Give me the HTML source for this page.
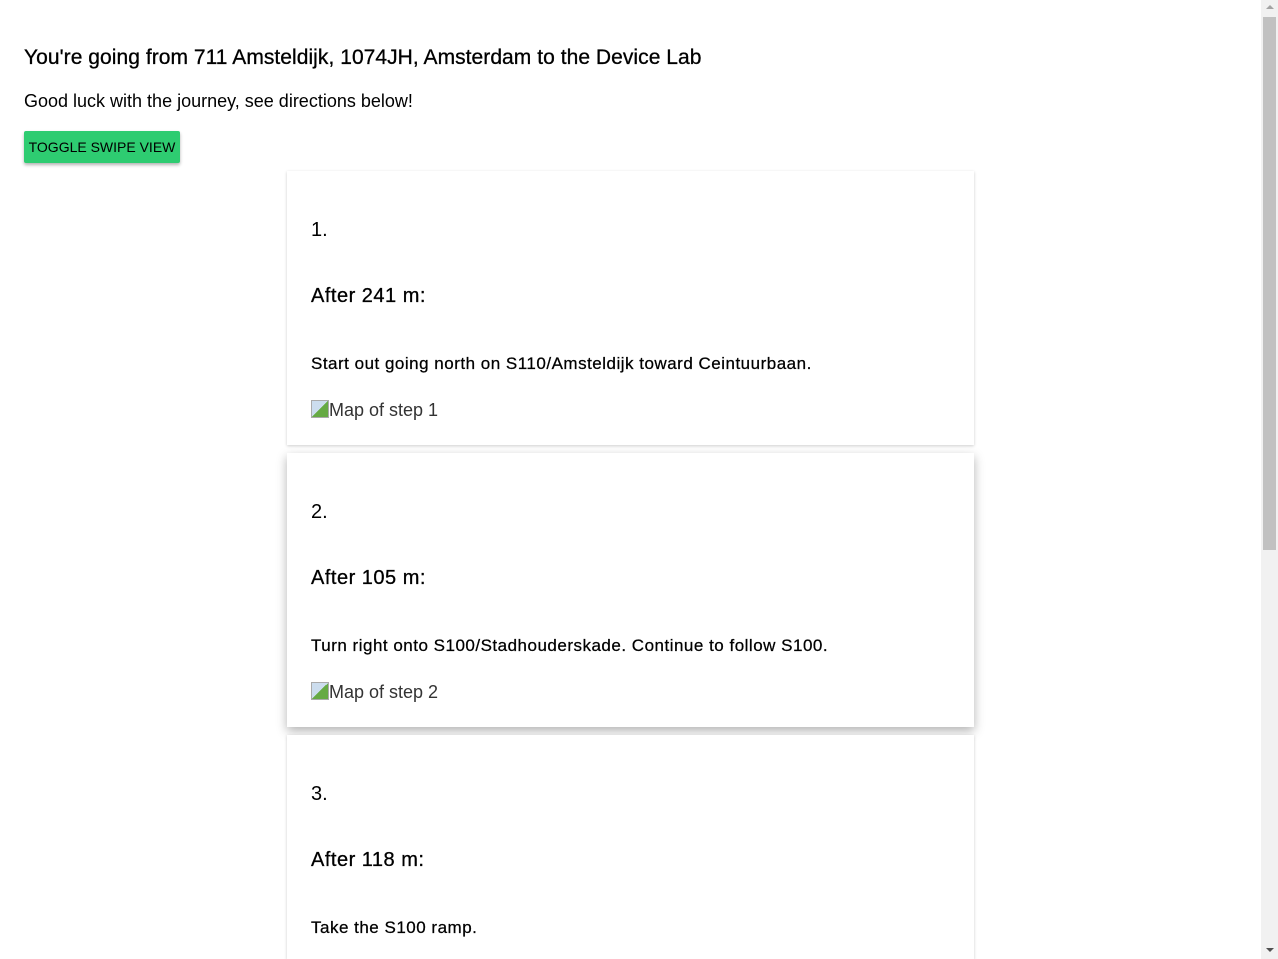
<!DOCTYPE html>
<html><head><style>
html,body{margin:0;padding:0;background:#fff;overflow:hidden;width:1278px;height:959px;font-family:"Liberation Sans",Arial,sans-serif;color:#000}
.wrap{position:relative;width:1278px;height:959px;overflow:hidden}
.a{position:absolute;white-space:nowrap}
h1{position:absolute;left:24px;top:46px;margin:0;font-size:21px;font-weight:normal;letter-spacing:0.05px;-webkit-text-stroke:0.3px #000}
.sub{left:24px;top:91px;font-size:18px}
.btn{position:absolute;left:24px;top:131px;width:156px;height:32px;background:#2ecc71;border-radius:2px;box-shadow:0 2px 3px rgba(0,0,0,.3);font-size:14px;line-height:32px;text-align:center}
.card{position:absolute;left:287px;width:687px;height:274px;background:#fff;box-shadow:0 1px 3px rgba(0,0,0,.2)}
.card.hi{box-shadow:0 4px 10px rgba(0,0,0,.3)}
.n{left:24px;top:48px;font-size:20px}
.h{left:24px;top:114px;font-size:20px;letter-spacing:0.5px;-webkit-text-stroke:0.3px #000}
.t{left:24px;top:183px;font-size:17px;-webkit-text-stroke:0.25px #000;letter-spacing:0.5px}
.m{left:24px;top:229px;font-size:18px;color:#333}
.m i{display:inline-block;width:16px;height:16px;border:1px solid #aaa;vertical-align:-2px;background:linear-gradient(135deg,#cde 50%,#6a4 50%)}
.sb{position:absolute;left:1261px;top:0;width:17px;height:959px;background:#f1f1f1}
.th{position:absolute;left:2px;top:17px;width:13px;height:533px;background:#c1c1c1}
</style></head><body><div class="wrap">
<h1>You're going from 711 Amsteldijk, 1074JH, Amsterdam to the Device Lab</h1>
<div class="a sub">Good luck with the journey, see directions below!</div>
<div class="btn">TOGGLE SWIPE VIEW</div>

<div class="card" style="top:171px">
<div class="a n">1.</div><div class="a h">After 241 m:</div>
<div class="a t">Start out going north on S110/Amsteldijk toward Ceintuurbaan.</div>
<div class="a m"><i></i>Map of step 1</div></div>

<div class="card hi" style="top:453px">
<div class="a n">2.</div><div class="a h">After 105 m:</div>
<div class="a t">Turn right onto S100/Stadhouderskade. Continue to follow S100.</div>
<div class="a m"><i></i>Map of step 2</div></div>

<div class="card" style="top:735px;height:224px">
<div class="a n">3.</div><div class="a h">After 118 m:</div>
<div class="a t">Take the S100 ramp.</div></div>

<div class="sb"><div class="th"></div>
<div style="position:absolute;left:5px;top:5px;border:4px solid transparent;border-bottom:4px solid #a3a3a3;border-top:0"></div>
<div style="position:absolute;left:5px;top:948px;border:4px solid transparent;border-top:4px solid #505050;border-bottom:0"></div>
</div>
</div></body></html>
